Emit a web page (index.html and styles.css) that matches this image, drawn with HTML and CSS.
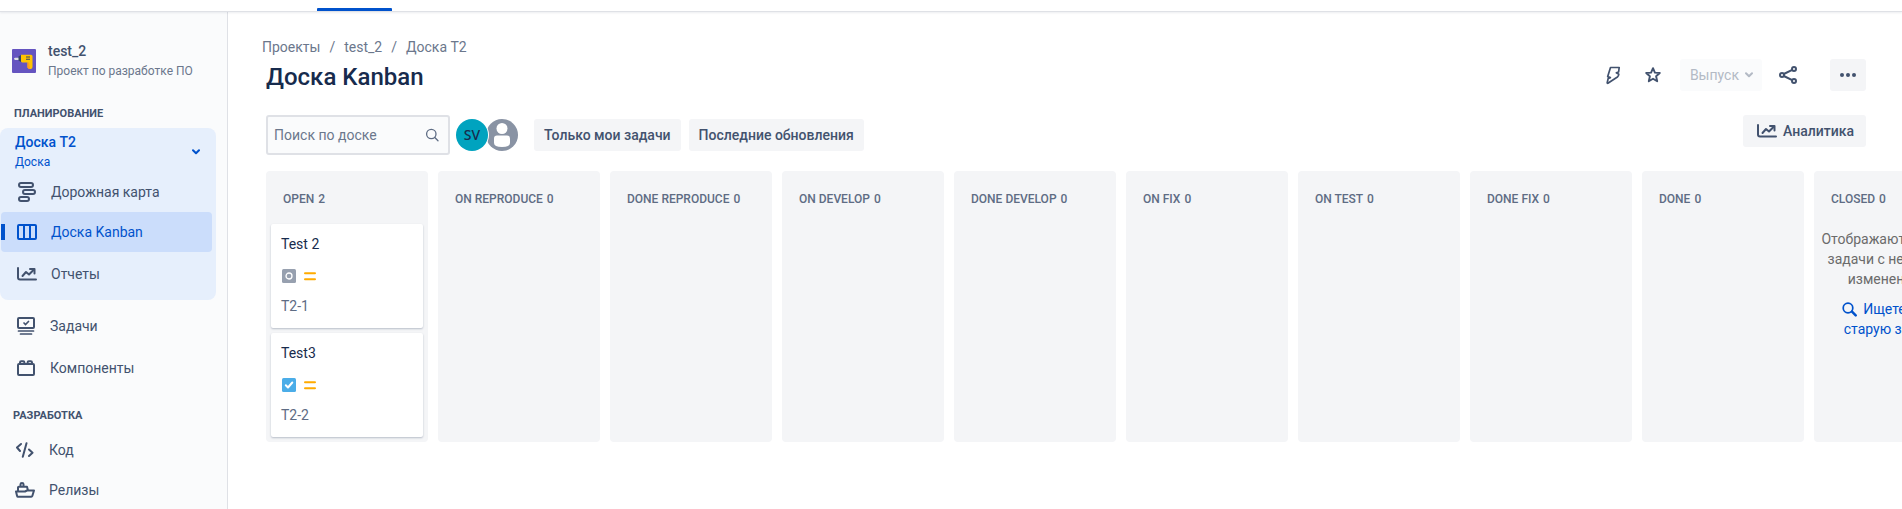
FILE: index.html
```html
<!DOCTYPE html>
<html lang="ru">
<head>
<meta charset="utf-8">
<title>Доска Kanban</title>
<link rel="stylesheet" href="styles.css">
</head>
<body>
<svg class="defs" aria-hidden="true">
  <symbol id="chart" viewBox="0 0 20 14">
    <path d="M1 1v9.500a2 2 0 0 0 2 2h16" fill="none" stroke="currentColor" stroke-width="2" stroke-linecap="round" stroke-linejoin="round"/>
    <path d="M5.500 9l3.500-4 3 2.500 4-4" fill="none" stroke="currentColor" stroke-width="2" stroke-linecap="round" stroke-linejoin="round"/>
    <path d="M13 2h4.500v4.500" fill="none" stroke="currentColor" stroke-width="2" stroke-linecap="round" stroke-linejoin="round"/>
  </symbol>
  <symbol id="medium" viewBox="0 0 12 9">
    <path d="M1 1.300h10M1 7.300h10" stroke="#ffab00" stroke-width="2" stroke-linecap="round"/>
  </symbol>
</svg>
<header class="topbar"><div class="topbar-tab"></div></header>
<div class="layout">
  <nav class="sidebar" aria-label="Проект">
    <div class="project">
      <svg width="24" height="24" viewBox="0 0 24 24" aria-hidden="true">
        <rect width="24" height="24" rx="1" fill="#6554c0"/>
        <path d="M2 9.500l1-.8h4v2.200H3l-1-.8z" fill="#dfe1e6"/>
        <path d="M6.500 7.500L9 6v7l-2.500-1.500z" fill="#344563"/>
        <path d="M9 5.700h10a1.500 1.500 0 0 1 1.500 1.500V18a2 2 0 0 1-2 2H17l-1.500-1.500V13.500H10l-1-1z" fill="#ffc400"/>
        <path d="M15.500 13.500h1.500l1 6.500h-1l-1.500-1.500z" fill="#ff991f"/>
        <path d="M14 7.500h4v1h-4zM14 9.700h4v1h-4z" fill="#344563"/>
      </svg>
      <div>
        <div class="project-name">test_2</div>
        <div class="project-type">Проект по разработке ПО</div>
      </div>
    </div>
    <h2 class="nav-heading">Планирование</h2>
    <div class="nav-panel">
      <button class="board-switch" type="button">
        <span><span class="board-name">Доска T2</span><span class="board-kind">Доска</span></span>
        <svg width="8" height="6" viewBox="0 0 8 6" aria-hidden="true"><path d="M1 1.200l3 3 3-3" fill="none" stroke="currentColor" stroke-width="2" stroke-linecap="round" stroke-linejoin="round"/></svg>
      </button>
      <a class="nav-item" href="#">
        <svg width="20" height="20" viewBox="0 0 20 20" fill="none" stroke="currentColor" stroke-width="2" aria-hidden="true"><rect x="2" y="1" width="14" height="4" rx="2"/><rect x="6" y="8" width="12" height="4" rx="2"/><rect x="2" y="15" width="10" height="4" rx="2"/></svg>
        <span>Дорожная карта</span>
      </a>
      <a class="nav-item nav-item-active" href="#" aria-current="page">
        <svg width="20" height="16" viewBox="0 0 20 16" fill="none" stroke="currentColor" stroke-width="2" aria-hidden="true"><rect x="1" y="1" width="18" height="14" rx="1"/><path d="M7 1v14M13 1v14"/></svg>
        <span>Доска Kanban</span>
      </a>
      <a class="nav-item nav-item-reports" href="#">
        <svg width="20" height="14" aria-hidden="true"><use href="#chart"/></svg>
        <span>Отчеты</span>
      </a>
    </div>
    <div class="nav-group">
      <a class="nav-item" href="#">
        <svg width="20" height="18" viewBox="0 0 20 18" fill="none" stroke="currentColor" stroke-width="2" aria-hidden="true"><rect x="1" y="1" width="16" height="10" rx="1"/><path d="M1.500 14h15M3.500 17h11M7 6l1.500 1.500 3-3" stroke-width="1.700" stroke-linecap="round"/></svg>
        <span>Задачи</span>
      </a>
      <a class="nav-item" href="#">
        <svg width="20" height="16" viewBox="0 0 20 16" fill="none" stroke="currentColor" stroke-width="2" aria-hidden="true"><rect x="1" y="4" width="16" height="11" rx="1"/><path d="M3 4V2.500q0-1.200 1.200-1.200h2q1.200 0 1.200 1.200V4M10.600 4V2.500q0-1.200 1.200-1.200h2q1.200 0 1.200 1.200V4"/></svg>
        <span>Компоненты</span>
      </a>
    </div>
    <h2 class="nav-heading nav-heading-dev">Разработка</h2>
    <div class="nav-dev">
      <a class="nav-item" href="#">
        <svg width="20" height="16" viewBox="0 0 20 16" fill="none" stroke="currentColor" stroke-width="2" stroke-linecap="round" stroke-linejoin="round" aria-hidden="true"><path d="M6 2L2 5.500 5 9M14 7.500l3.500 3.300L14 14M11.500 1.200L7.800 14.800"/></svg>
        <span>Код</span>
      </a>
      <a class="nav-item" href="#">
        <svg width="20" height="16" viewBox="0 0 20 16" fill="none" stroke="currentColor" stroke-width="2" stroke-linejoin="round" aria-hidden="true"><path d="M1 9.500h9l2-1h7l-1.700 5.500q-.3.800-1 .8H3q-.7 0-.9-.8zM3 9V5.500q0-.8.800-.8H12l1 3.800M5.500 4.500V2.300Q5.500 1 7 1t1.500 1.300v2.200"/></svg>
        <span>Релизы</span>
      </a>
    </div>
  </nav>
  <main class="main">
    <nav class="crumbs" aria-label="Навигация">
      <a href="#">Проекты</a><span>/</span><a href="#">test_2</a><span>/</span><a href="#">Доска T2</a>
    </nav>
    <div class="title-row">
      <h1>Доска Kanban</h1>
      <div class="actions">
        <button class="icon-btn" type="button" aria-label="Автоматизация"><svg width="16" height="20" viewBox="0 0 16 20" fill="none" stroke="currentColor" stroke-width="1.700" stroke-linejoin="round" aria-hidden="true"><path d="M5.500 2.500h8.700l-.6 4.500-2.300.8 2.500 1.500q-.1 1.700-1.400 2.700L2.900 18.200q-.8.300-.7-.6l1-4.100 2.200-.9-2.700-1z"/></svg></button>
        <button class="icon-btn" type="button" aria-label="В избранное"><svg width="18" height="18" viewBox="0 0 18 18" fill="none" stroke="currentColor" stroke-width="1.900" stroke-linejoin="round" aria-hidden="true"><path d="M9 2.200l1.900 4.400 4.900.4-3.700 3.300 1.100 5L9 12.800l-4.200 2.500 1.100-5L2.200 7l4.900-.4z"/></svg></button>
        <button class="btn release" type="button" disabled>Выпуск <svg width="8" height="6" viewBox="0 0 8 6" aria-hidden="true"><path d="M1 1.200l3 3 3-3" fill="none" stroke="currentColor" stroke-width="2" stroke-linecap="round" stroke-linejoin="round"/></svg></button>
        <button class="icon-btn share" type="button" aria-label="Поделиться"><svg width="20" height="20" viewBox="0 0 20 20" fill="none" stroke="currentColor" stroke-width="2" aria-hidden="true"><circle cx="4" cy="10" r="2"/><circle cx="16" cy="4" r="2"/><circle cx="16" cy="16" r="2"/><path d="M5.800 9l8.400-4.200M5.800 11l8.400 4.200"/></svg></button>
        <button class="btn more" type="button" aria-label="Ещё"><svg width="16" height="4" viewBox="0 0 16 4" fill="currentColor" aria-hidden="true"><circle cx="2" cy="2" r="2"/><circle cx="8" cy="2" r="2"/><circle cx="14" cy="2" r="2"/></svg></button>
      </div>
    </div>
    <div class="filters">
      <label class="search">
        <input type="text" placeholder="Поиск по доске" aria-label="Поиск по доске">
        <svg width="14" height="14" viewBox="0 0 14 14" fill="none" stroke="currentColor" stroke-width="1.300" stroke-linecap="round" aria-hidden="true"><circle cx="6.300" cy="6" r="4.700"/><path d="M9.800 9.500L13 12.700"/></svg>
      </label>
      <div class="avatars">
        <span class="avatar">SV</span>
        <svg class="avatar-empty" width="34" height="34" viewBox="-1 -1 34 34" aria-hidden="true"><circle cx="16" cy="16" r="16" fill="#8993a4"/><circle cx="16" cy="9.500" r="5.500" fill="#fff"/><path d="M8 19.500q0-3 3-3h10q3 0 3 3V24q0 4-8 4t-8-4z" fill="#fff"/></svg>
      </div>
      <button class="btn" type="button">Только мои задачи</button>
      <button class="btn" type="button">Последние обновления</button>
      <button class="btn insights" type="button"><svg width="20" height="14" aria-hidden="true"><use href="#chart"/></svg>Аналитика</button>
    </div>
    <div class="board">
      <section class="column">
        <h2>OPEN <span>2</span></h2>
        <article class="card">
          <h3>Test 2</h3>
          <div class="card-icons">
            <svg width="14" height="14" viewBox="0 0 14 14" aria-hidden="true"><rect width="14" height="14" rx="1.500" fill="#97a0af"/><circle cx="7" cy="7" r="3" fill="none" stroke="#fff" stroke-width="1.300"/></svg>
            <svg width="12" height="9" aria-hidden="true"><use href="#medium"/></svg>
          </div>
          <a href="#">T2-1</a>
        </article>
        <article class="card">
          <h3>Test3</h3>
          <div class="card-icons">
            <svg width="14" height="14" viewBox="0 0 14 14" aria-hidden="true"><rect width="14" height="14" rx="1.500" fill="#4bade8"/><path d="M3.800 7.300L6 9.500l4.300-5" fill="none" stroke="#fff" stroke-width="2" stroke-linecap="round" stroke-linejoin="round"/></svg>
            <svg width="12" height="9" aria-hidden="true"><use href="#medium"/></svg>
          </div>
          <a href="#">T2-2</a>
        </article>
      </section>
      <section class="column"><h2>ON REPRODUCE <span>0</span></h2></section>
      <section class="column"><h2>DONE REPRODUCE <span>0</span></h2></section>
      <section class="column"><h2>ON DEVELOP <span>0</span></h2></section>
      <section class="column"><h2>DONE DEVELOP <span>0</span></h2></section>
      <section class="column"><h2>ON FIX <span>0</span></h2></section>
      <section class="column"><h2>ON TEST <span>0</span></h2></section>
      <section class="column"><h2>DONE FIX <span>0</span></h2></section>
      <section class="column"><h2>DONE <span>0</span></h2></section>
      <section class="column">
        <h2>CLOSED <span>0</span></h2>
        <div class="closed-note">
          <p>Отображаются только задачи с недавними изменениями.</p>
          <a href="#"><svg width="16" height="15" viewBox="0 0 16 15" fill="none" stroke="currentColor" stroke-linecap="round" aria-hidden="true"><circle cx="6" cy="6" r="4.800" stroke-width="1.700"/><path d="M10 9.700l3.700 3.600" stroke-width="2.500"/></svg>Ищете более старую задачу?</a>
        </div>
      </section>
    </div>
  </main>
</div>
</body>
</html>
```

FILE: styles.css
```css
* { box-sizing: border-box; }
body {
  margin: 0;
  height: 100vh;
  overflow: hidden;
  display: flex;
  flex-direction: column;
  background: #fff;
  color: #172b4d;
  font: 14px/20px Roboto, "Noto Sans", sans-serif;
}
h1, h2, h3, p { margin: 0; }
a { color: inherit; text-decoration: none; }
button, input { font: inherit; color: inherit; border: 0; }
svg { flex: none; }
.defs { position: absolute; width: 0; height: 0; }

.topbar {
  position: relative;
  flex: none;
  height: 11px;
  padding-left: 317px;
  display: flex;
  align-items: flex-end;
  background: #fff;
  box-shadow: 0 1px 0 #dfe1e6, 0 2px 2px rgba(9, 30, 66, 0.08);
}
.topbar-tab { width: 75px; height: 3px; background: #0052cc; border-radius: 1px 1px 0 0; }

.layout { flex: 1; min-height: 0; display: flex; }

.sidebar {
  flex: 0 0 228px;
  overflow: hidden;
  padding-top: 30px;
  background: #fafbfc;
  border-right: 1px solid #dfe1e6;
  color: #42526e;
}
.project { display: flex; align-items: center; gap: 12px; padding-left: 12px; }
.project-name { font-weight: 500; }
.project-type { font-size: 12px; color: #6b778c; }
.nav-heading {
  padding: 25px 0 6px 14px;
  font-size: 11px;
  line-height: 16px;
  font-weight: 700;
  text-transform: uppercase;
}
.nav-panel { width: 216px; padding-bottom: 6px; background: #e6effc; border-radius: 8px; }
.board-switch {
  width: 100%;
  height: 44px;
  padding: 3px 16px 0 15px;
  display: flex;
  align-items: center;
  justify-content: space-between;
  background: none;
  color: #0052cc;
  text-align: left;
}
.board-name, .board-kind { display: block; }
.board-name { font-weight: 500; }
.board-kind { font-size: 12px; }
.nav-item { display: flex; align-items: center; gap: 14px; height: 40px; padding-left: 17px; }
.nav-item-active {
  width: 211px;
  margin-left: 1px;
  padding-left: 16px;
  background: linear-gradient(#0052cc, #0052cc) left center / 4px 16px no-repeat #cbddfb;
  border-radius: 4px;
  color: #0052cc;
}
.nav-item-reports { margin-top: 2px; }
.nav-group { display: grid; gap: 2px; padding-top: 6px; }
.nav-group .nav-item { gap: 13px; }
.nav-heading-dev { padding: 20px 0 6px 13px; }
.nav-dev .nav-item { padding-left: 15px; }

.main { flex: 1; min-width: 0; padding: 26px 0 0 38px; }
.crumbs { display: flex; gap: 9px; margin-left: -4px; color: #6b778c; }
.title-row { display: flex; justify-content: space-between; padding: 2px 36px 0 0; }
.title-row h1 { padding-top: 4px; font-size: 24px; line-height: 28px; font-weight: 500; }
.actions { display: flex; align-items: center; color: #42526e; }
.icon-btn {
  width: 40px;
  height: 32px;
  padding: 0;
  display: flex;
  align-items: center;
  justify-content: center;
  background: none;
}
.btn {
  height: 32px;
  padding: 0 10px;
  display: flex;
  align-items: center;
  gap: 6px;
  background: #f4f5f7;
  border-radius: 3px;
  color: #42526e;
  font-weight: 500;
}
.release { margin-left: 7px; padding-right: 9px; background: #fafbfc; color: #b3bac5; font-weight: 400; }
.share { margin: 0 22px 0 6px; }
.filters { display: flex; align-items: center; gap: 8px; padding: 24px 36px 16px 0; }
.search {
  width: 184px;
  height: 40px;
  padding: 0 9px 0 6px;
  display: flex;
  align-items: center;
  gap: 8px;
  border: 2px solid #dfe1e6;
  border-radius: 3px;
  background: #fafbfc;
  color: #5e6c84;
}
.search input { flex: 1; min-width: 0; padding: 0; background: none; outline: 0; }
.search input::placeholder { color: #6b778c; opacity: 1; }
.avatars { display: flex; align-items: center; margin: 0 7px 0 -2px; }
.avatar {
  z-index: 1;
  width: 32px;
  height: 32px;
  border-radius: 50%;
  background: #00a3bf;
  box-shadow: 0 0 0 1px #fff;
  color: #172b4d;
  font-family: "Noto Sans", Roboto, sans-serif;
  line-height: 32px;
  text-align: center;
  font-weight: 500;
}
.avatar-empty { margin-left: -3px; }
.insights { align-self: flex-start; margin-left: auto; padding: 0 12px 0 14px; }

.board { display: flex; gap: 10px; overflow: hidden; }
.column { flex: 0 0 162px; padding: 0 5px 5px; background: #f4f5f7; border-radius: 4px; }
.column h2 {
  padding: 18px 0 15px 12px;
  font-size: 12px;
  font-weight: 500;
  color: #5e6c84;
}
.column h2 span { margin-left: 1px; }
.card {
  padding: 10px 10px 12px;
  border-radius: 2px;
  background: #fff;
  box-shadow: 0 1px 2px rgba(9, 30, 66, 0.25);
}
.card + .card { margin-top: 5px; }
.card h3 { font-size: 14px; font-weight: 400; }
.card-icons { display: flex; align-items: center; gap: 8px; height: 14px; margin: 15px 0 13px; padding-left: 1px; }
.card a { display: block; color: #5e6c84; }
.closed-note { text-align: center; color: #6b6b6b; padding-top: 5px; }
.closed-note a { display: block; margin-top: 10px; color: #0052cc; }
.closed-note svg { margin-right: 5px; vertical-align: -3px; }
```
